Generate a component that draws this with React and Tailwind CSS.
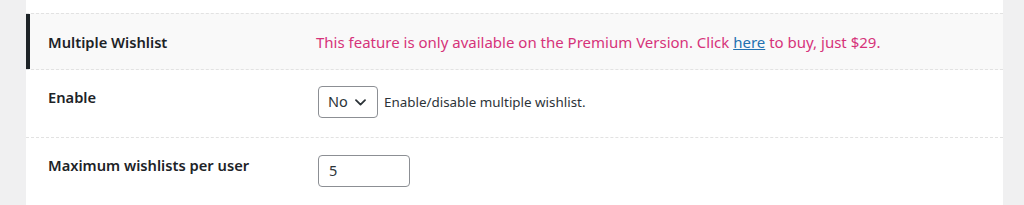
import React from "react";

export default function App() {
  const font = { fontFamily: '"Noto Sans", "Open Sans", sans-serif' };
  return (
    <div className="w-[1024px] h-[205px] bg-[#f0f0f1] flex overflow-hidden" style={font}>
      <div className="ml-[26px] w-[977px] h-full bg-white flex flex-col">
        <div className="h-[13px]" />
        <div className="h-[57px] bg-[#f9f9f9] border-y border-dashed border-[#e2e2e2] flex items-center relative">
          <div className="absolute left-0 top-0 bottom-0 w-[4px] bg-[#1d2327]" />
          <div className="w-[290px] pl-[22px] text-[14.7px] font-semibold text-[#1d2327] leading-[20px]">Multiple Wishlist</div>
          <div className="text-[15px] text-[#d6337a] leading-[20px]">
            This feature is only available on the Premium Version. Click{" "}
            <a className="text-[#2271b1] underline">here</a> to buy, just $29.
          </div>
        </div>
        <div className="h-[68px] border-b border-dashed border-[#e2e2e2] flex">
          <div className="w-[292px] pl-[22px] pt-[17px] text-[14.7px] font-semibold text-[#1d2327] leading-[20px]">Enable</div>
          <div className="pt-[16px] flex items-start">
            <div className="w-[60px] h-[32px] border border-[#8c8f94] rounded-[4px] flex items-center pl-[9px] text-[14.5px] text-[#2c3338] bg-white">
              <span>No</span>
              <svg className="ml-[7px]" width="11" height="7" viewBox="0 0 11 7" fill="none">
                <path d="M1 1.2 L5.5 5.6 L10 1.2" stroke="#2c3338" strokeWidth="1.8" strokeLinecap="round" strokeLinejoin="round" />
              </svg>
            </div>
            <span className="ml-[6px] h-[32px] flex items-center text-[13.4px] text-[#2c3338]">Enable/disable multiple wishlist.</span>
          </div>
        </div>
        <div className="flex-1 flex">
          <div className="w-[292px] pl-[22px] pt-[17px] text-[14.7px] font-semibold text-[#1d2327] leading-[20px]">Maximum wishlists per user</div>
          <div className="pt-[17px]">
            <div className="w-[92px] h-[32px] border border-[#8c8f94] rounded-[4px] flex items-center pl-[10px] text-[14.5px] text-[#2c3338] bg-white">5</div>
          </div>
        </div>
      </div>
    </div>
  );
}
